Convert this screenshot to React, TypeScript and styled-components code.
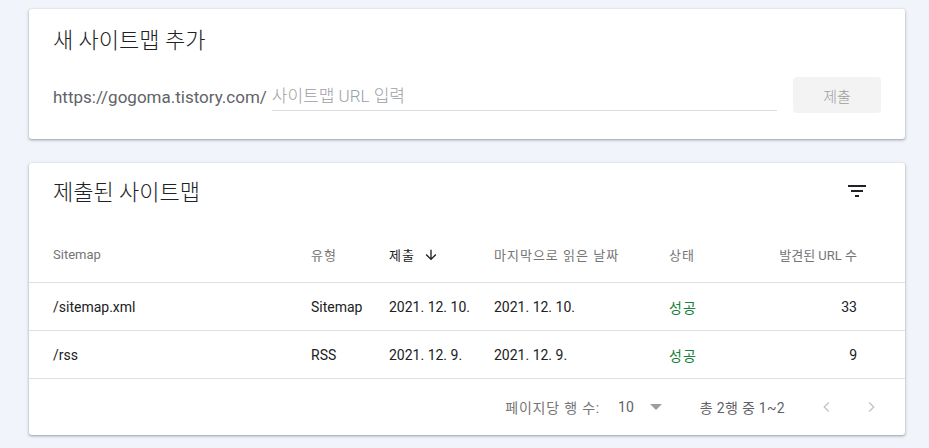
import React from "react";
import styled, { createGlobalStyle } from "styled-components";

const Global = createGlobalStyle`
  html, body { margin: 0; padding: 0; background: #f1f4fb; }
  body { font-family: Roboto, "Noto Sans CJK KR", sans-serif; color: #202124; }
  * { box-sizing: border-box; }
`;

const Page = styled.div`
  padding: 9px 24px 12px 29px;
  display: flex;
  flex-direction: column;
  gap: 24px;
`;

const Card = styled.section`
  background: #fff;
  border-radius: 3px;
  box-shadow: 0 1px 2px rgba(60, 64, 67, 0.3), 0 1px 3px 1px rgba(60, 64, 67, 0.15);
`;

const AddCard = styled(Card)`
  padding: 18px 24px 26px 24px;
`;

const Title = styled.h2`
  margin: 0;
  font-size: 22px;
  line-height: 28px;
  font-weight: 300;
  color: #202124;
`;

const InputRow = styled.div`
  margin-top: 22px;
  display: flex;
  align-items: center;
  height: 36px;
`;

const Prefix = styled.span`
  font-size: 17px;
  color: #5f6368;
  margin-right: 5px;
  padding-top: 4px;
`;

const UrlInput = styled.input`
  flex: 1;
  height: 30px;
  margin-top: 2px;
  border: none;
  border-bottom: 1px solid #dadce0;
  outline: none;
  padding: 0;
  font-family: Roboto, "Noto Sans CJK KR", sans-serif;
  font-size: 17px;
  font-weight: 300;
  color: #202124;
  &::placeholder { color: #9aa0a6; }
`;

const SubmitButton = styled.button`
  margin-left: 16px;
  width: 88px;
  height: 36px;
  border: none;
  border-radius: 4px;
  background: #f3f3f3;
  color: #9e9e9e;
  font-family: Roboto, "Noto Sans CJK KR", sans-serif;
  font-size: 15px;
  font-weight: 300;
`;

const TitleRow = styled.div`
  height: 60px;
  padding: 0 24px;
  display: flex;
  align-items: center;
  justify-content: space-between;
`;

const IconButton = styled.button`
  width: 48px;
  height: 48px;
  margin-top: -4px;
  border: none;
  background: transparent;
  display: flex;
  align-items: center;
  justify-content: center;
  padding: 0;
  color: #202124;
`;

const Grid = styled.div`
  display: grid;
  grid-template-columns: 258px 78px 105px 175px 70px 1fr;
  align-items: center;
  padding: 0 48px 0 24px;
`;

const HeaderRow = styled(Grid)`
  height: 60px;
  padding-top: 4px;
  border-bottom: 1px solid #e0e0e0;
`;

const HeadCell = styled.div<{ $active?: boolean; $right?: boolean; $ko?: boolean }>`
  font-size: 13px;
  color: ${(p) => (p.$active ? "#202124" : "#757575")};
  letter-spacing: ${(p) => (p.$ko ? "1px" : "0")};
  text-align: ${(p) => (p.$right ? "right" : "left")};
  display: flex;
  align-items: center;
  justify-content: ${(p) => (p.$right ? "flex-end" : "flex-start")};
  gap: 8px;
`;

const BodyRow = styled(Grid)`
  height: 48px;
  border-bottom: 1px solid #e0e0e0;
`;

const Cell = styled.div<{ $right?: boolean; $status?: boolean }>`
  font-size: 14px;
  color: ${(p) => (p.$status ? "#188038" : "#202124")};
  letter-spacing: ${(p) => (p.$status ? "1px" : "0")};
  text-align: ${(p) => (p.$right ? "right" : "left")};
`;

const Footer = styled.div`
  height: 56px;
  display: flex;
  align-items: center;
  justify-content: flex-end;
  padding-right: 14px;
  font-size: 14px;
  color: #5f6368;
`;

const RowsLabel = styled.span`
  color: #757575;
  letter-spacing: 0.8px;
`;

const Select = styled.div`
  margin-left: 18px;
  display: flex;
  align-items: center;
  gap: 16px;
  color: #5f6368;
`;

const Caret = styled.span`
  width: 0;
  height: 0;
  border-left: 6px solid transparent;
  border-right: 6px solid transparent;
  border-top: 6px solid #9e9e9e;
`;

const Range = styled.span`
  margin-left: 38px;
  color: #5f6368;
  letter-spacing: 0.3px;
`;

const Nav = styled.div`
  margin-left: 22px;
  display: flex;
  gap: 4px;
`;

const NavButton = styled.button`
  width: 40px;
  height: 40px;
  border: none;
  background: transparent;
  padding: 0;
  display: flex;
  align-items: center;
  justify-content: center;
  color: #c4c4c4;
`;

const FilterIcon = () => (
  <svg width="24" height="24" viewBox="0 0 24 24" fill="currentColor">
    <path d="M10 18h4v-2h-4v2zM3 6v2h18V6H3zm3 7h12v-2H6v2z" />
  </svg>
);

const ArrowDown = () => (
  <svg width="16" height="16" viewBox="0 0 24 24" fill="#202124">
    <path d="M20 12l-1.41-1.41L13 16.17V4h-2v12.17l-5.58-5.59L4 12l8 8 8-8z" />
  </svg>
);

const Chevron = ({ dir }: { dir: "left" | "right" }) => (
  <svg width="22" height="22" viewBox="0 0 24 24" fill="none" stroke="currentColor" strokeWidth="1.5">
    {dir === "left" ? <path d="M14 7l-5 5 5 5" /> : <path d="M10 7l5 5-5 5" />}
  </svg>
);

const rows = [
  { path: "/sitemap.xml", type: "Sitemap", submitted: "2021. 12. 10.", read: "2021. 12. 10.", status: "성공", count: 33 },
  { path: "/rss", type: "RSS", submitted: "2021. 12. 9.", read: "2021. 12. 9.", status: "성공", count: 9 },
];

export default function App() {
  return (
    <>
      <Global />
      <Page>
        <AddCard>
          <Title>새 사이트맵 추가</Title>
          <InputRow>
            <Prefix>https://gogoma.tistory.com/</Prefix>
            <UrlInput placeholder="사이트맵 URL 입력" />
            <SubmitButton>제출</SubmitButton>
          </InputRow>
        </AddCard>
        <Card>
          <TitleRow>
            <Title>제출된 사이트맵</Title>
            <IconButton aria-label="필터">
              <FilterIcon />
            </IconButton>
          </TitleRow>
          <HeaderRow>
            <HeadCell>Sitemap</HeadCell>
            <HeadCell $ko>유형</HeadCell>
            <HeadCell $active $ko>
              제출 <ArrowDown />
            </HeadCell>
            <HeadCell $ko>마지막으로 읽은 날짜</HeadCell>
            <HeadCell $ko>상태</HeadCell>
            <HeadCell $right>발견된 URL 수</HeadCell>
          </HeaderRow>
          {rows.map((r) => (
            <BodyRow key={r.path}>
              <Cell>{r.path}</Cell>
              <Cell>{r.type}</Cell>
              <Cell>{r.submitted}</Cell>
              <Cell>{r.read}</Cell>
              <Cell $status>{r.status}</Cell>
              <Cell $right>{r.count}</Cell>
            </BodyRow>
          ))}
          <Footer>
            <RowsLabel>페이지당 행 수:</RowsLabel>
            <Select>
              <span>10</span>
              <Caret />
            </Select>
            <Range>총 2행 중 1~2</Range>
            <Nav>
              <NavButton aria-label="이전">
                <Chevron dir="left" />
              </NavButton>
              <NavButton aria-label="다음">
                <Chevron dir="right" />
              </NavButton>
            </Nav>
          </Footer>
        </Card>
      </Page>
    </>
  );
}
